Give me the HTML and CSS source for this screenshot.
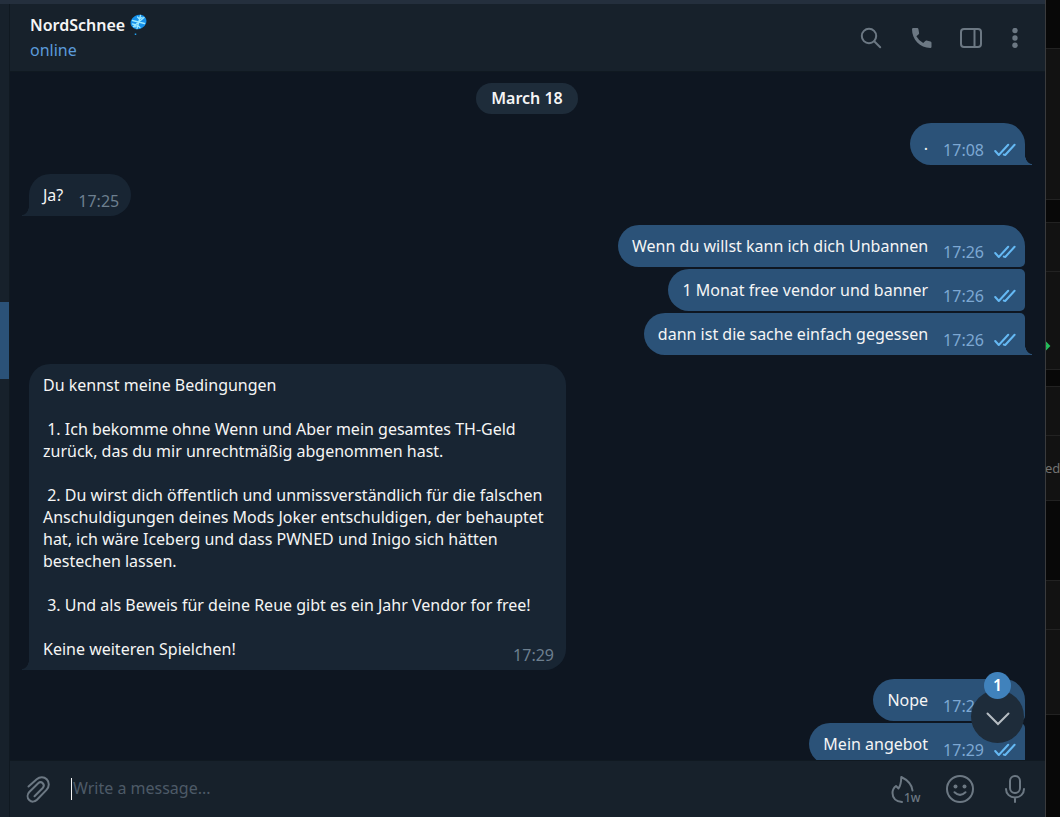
FILE: index.html
```html
<!DOCTYPE html>
<html lang="de">
<head>
<meta charset="utf-8">
<title>NordSchnee</title>
<meta name="viewport" content="width=device-width, initial-scale=1">
<link rel="stylesheet" href="styles.css">
</head>
<body>
<svg class="defs" width="0" height="0" aria-hidden="true">
  <symbol id="read" viewBox="0 0 22 14">
    <path d="M1.2 8 4.800 12 14.200 1.800M9.800 11.600 11.200 12 20.600 1.800" fill="none" stroke="currentColor" stroke-width="2" stroke-linecap="round" stroke-linejoin="round"/>
  </symbol>
</svg>
<div class="window">
  <div class="titlebar"></div>
  <div class="panes">
    <aside class="chatlist"><div class="selected"></div></aside>
    <main class="chat">
      <header class="header">
        <div class="peer">
          <h1 class="name">NordSchnee
            <svg class="flake" width="17" height="24" viewBox="0 0 17 24" aria-hidden="true">
              <ellipse cx="8.500" cy="9" rx="8.200" ry="7" transform="rotate(-30 8.500 9)" fill="#1590ea"/>
              <g stroke="#9be8ff" stroke-width="1.300" stroke-linecap="round" fill="none">
                <path d="M10.500 2.500 7 15.500M2.500 7.500 14.500 10.500M3.500 13.500 14 4.500M7.500 4 9.300 6 12 4.500M5 13.500 7.600 12.500 10 14.500M2.500 11 5 11.500 5 14"/>
              </g>
              <path d="M5.500 20.500v1.500" stroke="#22a2f2" stroke-width="1.500"/>
            </svg>
          </h1>
          <p class="status">online</p>
        </div>
        <nav class="tools">
          <button class="icon" aria-label="Search"><svg width="22" height="22" viewBox="0 0 22 22"><circle cx="9" cy="9" r="7.200"/><path d="m14.200 14.200 6 6"/></svg></button>
          <button class="icon" aria-label="Call"><svg width="22" height="22" viewBox="0 0 22 22"><path class="solid" d="M3.300 1H7.300Q8.200 1 8.400 2L9.100 6Q9.200 6.700 8.700 7.200L6.400 9.200Q9 14 13.200 16L15.300 13.900Q15.800 13.400 16.500 13.600L20.500 14.500Q21.500 14.700 21.500 15.700V19.800Q21.500 21 20.300 21C10 21 2 12.500 2 2.300Q2 1 3.300 1Z"/></svg></button>
          <button class="icon" aria-label="Toggle info panel"><svg width="22" height="20" viewBox="0 0 22 20"><rect x="1" y="1" width="20" height="18" rx="3"/><path d="M14.500 1v18"/></svg></button>
          <button class="icon menu" aria-label="Menu"><svg width="6" height="20" viewBox="0 0 6 20"><g class="solid"><circle cx="3" cy="2.500" r="2.700"/><circle cx="3" cy="10" r="2.700"/><circle cx="3" cy="17.300" r="2.700"/></g></svg></button>
        </nav>
      </header>

      <section class="history">
        <div class="date">March 18</div>
        <div class="group out">
          <div class="bubble tail"><div class="row"><p>.</p><span class="meta"><time>17:08</time><svg class="read" width="22" height="14"><use href="#read"/></svg></span></div></div>
        </div>
        <div class="group in">
          <div class="bubble tail"><div class="row"><p>Ja?</p><span class="meta"><time>17:25</time></span></div></div>
        </div>
        <div class="group out">
          <div class="bubble"><div class="row"><p>Wenn du willst kann ich dich Unbannen</p><span class="meta"><time>17:26</time><svg class="read" width="22" height="14"><use href="#read"/></svg></span></div></div>
          <div class="bubble"><div class="row"><p>1 Monat free vendor und banner</p><span class="meta"><time>17:26</time><svg class="read" width="22" height="14"><use href="#read"/></svg></span></div></div>
          <div class="bubble tail"><div class="row"><p>dann ist die sache einfach gegessen</p><span class="meta"><time>17:26</time><svg class="read" width="22" height="14"><use href="#read"/></svg></span></div></div>
        </div>
        <div class="group in">
          <div class="bubble tail">
            <p class="long">Du kennst meine Bedingungen

 1. Ich bekomme ohne Wenn und Aber mein gesamtes TH-Geld zurück, das du mir unrechtmäßig abgenommen hast.

 2. Du wirst dich öffentlich und unmissverständlich für die falschen Anschuldigungen deines Mods Joker entschuldigen, der behauptet hat, ich wäre Iceberg und dass PWNED und Inigo sich hätten bestechen lassen.

 3. Und als Beweis für deine Reue gibt es ein Jahr Vendor for free!</p>
            <div class="row last"><p>Keine weiteren Spielchen!</p><span class="meta"><time>17:29</time></span></div>
          </div>
        </div>
        <div class="group out">
          <div class="bubble"><div class="row"><p>Nope</p><span class="meta"><time>17:29</time><svg class="read" width="22" height="14"><use href="#read"/></svg></span></div></div>
          <div class="bubble"><div class="row"><p>Mein angebot</p><span class="meta"><time>17:29</time><svg class="read" width="22" height="14"><use href="#read"/></svg></span></div></div>
        </div>
        <button class="jump" aria-label="Scroll to bottom">
          <svg width="24" height="14" viewBox="0 0 24 14" aria-hidden="true"><path d="M1.500 1.500 12 12 22.500 1.500"/></svg>
          <span class="badge">1</span>
        </button>
      </section>

      <footer class="composer">
        <button class="icon" aria-label="Attach file"><svg width="24" height="28" viewBox="0 0 24 28"><path d="M2.500 11.500 10.700 4.200C13.800 1.500 18 1.500 20.700 4.300 23.500 7.200 23.500 11.700 20.500 14.900L11 24.800C8.800 27.200 5.300 27.200 3.200 25 1 22.700 1.100 19.300 3.300 17L12.200 8.200C13.700 6.800 15.500 6.900 16.800 8.200 18.100 9.600 18.100 11.500 16.700 13L8.500 21.300"/></svg></button>
        <div class="field"><span class="caret"></span><input class="input" type="text" placeholder="Write a message..." aria-label="Write a message"></div>
        <div class="actions">
          <button class="icon timer" aria-label="Auto-delete after one week"><svg width="24" height="28" viewBox="0 0 24 28"><path d="M11 27C5 26.500 1.500 23 1.500 18 1.500 15 3 12.500 5 11L7.500 13.500C9.300 11 10.200 6.500 10.300 2 15.500 4.500 20.800 9.500 21.500 15.500"/></svg><span class="week">1w</span></button>
          <button class="icon" aria-label="Emoji"><svg width="28" height="28" viewBox="0 0 28 28"><circle cx="14" cy="14" r="13"/><path d="M8.500 17.300Q14 22.500 19.500 17.300"/><g class="solid"><circle cx="9.500" cy="11.500" r="2"/><circle cx="18.500" cy="11.500" r="2"/></g></svg></button>
          <button class="icon" aria-label="Record voice message"><svg width="20" height="28" viewBox="0 0 20 28"><rect x="5" y="1" width="10" height="17" rx="5"/><path d="M1 14C1 19 5 22.500 10 22.500S19 19 19 14M10 22.500V27"/></svg></button>
        </div>
      </footer>
    </main>
  </div>
</div>
<div class="backdrop">
  <div class="card first"><div class="cell"></div></div>
  <div class="card second"><div class="head"></div><div class="cell"><svg class="arrow" width="6" height="10" viewBox="0 0 6 10" aria-hidden="true"><path d="M0 1 4 5 0 9M0 5h4" fill="none" stroke="#24bd5c" stroke-width="2"/></svg></div></div>
  <div class="card third"><div class="head"></div><div class="cell"><span class="word">ed</span></div></div>
  <div class="card fourth"><div class="head"></div><div class="cell"></div></div>
</div>
</body>
</html>
```
FILE: styles.css
```css
* { box-sizing: border-box; }
body {
  margin: 0;
  height: 100vh;
  display: flex;
  overflow: hidden;
  background: #080808;
  color: #f5f5f5;
  font: 16px/22px "Noto Sans", "Open Sans", sans-serif;
}
h1, p { margin: 0; }
button { border: 0; padding: 0; background: none; font: inherit; color: inherit; }
.defs { position: absolute; }

.window { flex: 1; min-width: 0; display: flex; flex-direction: column; background: #17212b; }
.titlebar { height: 4px; background: #242f3d; }
.panes { flex: 1; min-height: 0; display: flex; }
.chatlist { width: 9px; padding-top: 298px; background: #17212b; }
.selected { height: 77px; background: #2b5278; }
.chat {
  flex: 1;
  min-width: 0;
  display: flex;
  flex-direction: column;
  border-left: 1px solid #101921;
}

.header {
  height: 68px;
  padding: 0 27px 0 20px;
  display: flex;
  align-items: center;
  justify-content: space-between;
  background: #17212b;
  border-bottom: 1px solid #101921;
}
.name { display: flex; align-items: center; gap: 5px; height: 25px; font-size: 16px; font-weight: 600; }
.status { color: #5b9bdb; line-height: 25px; }
.tools { display: flex; align-items: center; gap: 28px; color: #6c7883; }
.menu { margin-left: 2px; }
.icon { display: block; color: #6c7883; }
.icon svg { display: block; fill: none; stroke: currentColor; stroke-width: 2; stroke-linecap: round; stroke-linejoin: round; }
.icon .solid { fill: currentColor; stroke: none; }

.history {
  position: relative;
  flex: 1;
  min-height: 0;
  overflow: hidden;
  padding: 11px 20px 0 19px;
  display: flex;
  flex-direction: column;
  gap: 9px;
  background: #0e1621;
}
.date {
  align-self: center;
  flex: none;
  padding: 4px 15px 5px;
  border-radius: 16px;
  background: #1e2c3a;
  font-weight: 600;
}
.group { flex: none; display: flex; flex-direction: column; gap: 2px; }
.in { align-items: flex-start; }
.out { align-items: flex-end; }
.bubble {
  position: relative;
  max-width: 537px;
  min-height: 42px;
  padding: 10px 12px 4px 14px;
}
.in .bubble { background: #182533; border-radius: 21px 21px 21px 0; }
.out .bubble { padding-right: 9px; background: #2b5278; border-radius: 21px 5px 5px 21px; }
.out .bubble:first-child { border-top-right-radius: 21px; }
.out .bubble.tail { border-bottom-right-radius: 0; }
.tail::after { content: ""; position: absolute; bottom: 0; width: 7px; height: 11px; }
.out .tail::after { left: 100%; background: radial-gradient(7px 10px at 100% 0, transparent 96%, #2b5278 104%); }
.in .tail::after { right: 100%; background: radial-gradient(7px 10px at 0 0, transparent 96%, #182533 104%); }
.row { display: flex; align-items: flex-end; justify-content: space-between; gap: 15px; }
.row p { padding-bottom: 6px; }
.long { white-space: pre-wrap; }
.last { padding-top: 22px; }
.meta { display: flex; align-items: center; gap: 10px; color: #6d7f8f; }
.out .meta { color: #7da8d3; }
.read { color: #65b9f4; }

.jump {
  position: absolute;
  right: 21px;
  bottom: 17px;
  width: 53px;
  height: 53px;
  display: grid;
  place-items: center;
  padding-top: 4px;
  border-radius: 50%;
  background: #1e2c3a;
}
.jump svg { fill: none; stroke: #b6bdc3; stroke-width: 2; stroke-linecap: round; }
.badge {
  position: absolute;
  top: -18px;
  left: 13px;
  width: 27px;
  height: 27px;
  border-radius: 50%;
  background: #4082bc;
  color: #fff;
  font-weight: 600;
  line-height: 27px;
  text-align: center;
}

.composer {
  height: 57px;
  padding: 0 20px 0 16px;
  display: flex;
  align-items: center;
  background: #17212b;
  border-top: 1px solid #101921;
}
.field { flex: 1; display: flex; align-items: center; padding-left: 21px; }
.caret { width: 1px; height: 22px; background: #f5f5f5; }
.input { flex: 1; min-width: 0; border: 0; outline: 0; padding: 0 0 2px 1px; background: none; color: inherit; font: inherit; }
.input::placeholder { color: #4d5a67; opacity: 1; }
.actions { display: flex; align-items: center; gap: 31px; }
.timer { display: flex; width: 24px; }
.timer svg { flex: none; }
.week { align-self: flex-end; margin-left: -11px; font-size: 12px; font-weight: 500; line-height: 10px; }

.backdrop { width: 15px; overflow: hidden; border-left: 1px solid #3a3b3d; background: #080808; }
.card { background: #121212; border-top: 1px solid #222; border-bottom: 1px solid #222; }
.head { height: 49px; border-bottom: 1px solid #222; }
.first { margin-top: 48px; height: 152px; }
.second { margin-top: 22px; height: 148px; }
.third { margin-top: 16px; height: 115px; }
.fourth { margin-top: 79px; height: 135px; }
.cell { display: flex; }
.arrow { margin-top: 69px; margin-left: -1px; }
.word { padding-top: 21px; margin-left: -1px; color: #737373; font-size: 13px; }
```
